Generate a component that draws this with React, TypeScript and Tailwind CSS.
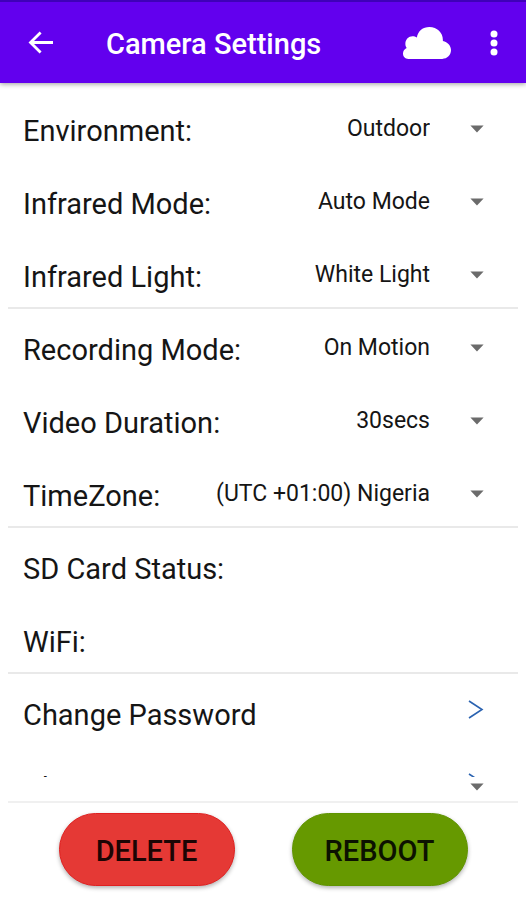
import { useState, type JSX, type ReactNode } from "react";

type Option = { id: string; label: string; options: string[]; last?: boolean };

const IMAGE_SETTINGS: Option[] = [
  { id: "environment", label: "Environment:", options: ["Outdoor", "Indoor"] },
  { id: "infrared-mode", label: "Infrared Mode:", options: ["Auto Mode", "On", "Off"] },
  { id: "infrared-light", label: "Infrared Light:", options: ["White Light", "Infrared"], last: true },
];

const RECORDING_SETTINGS: Option[] = [
  { id: "recording-mode", label: "Recording Mode:", options: ["On Motion", "Always", "Never"] },
  { id: "video-duration", label: "Video Duration:", options: ["30secs", "15secs", "60secs"] },
  { id: "timezone", label: "TimeZone:", options: ["(UTC +01:00) Nigeria", "(UTC +00:00) Ghana"], last: true },
];

function BackIcon(): JSX.Element {
  return (
    <svg width="26" height="24" viewBox="0 0 26 24" fill="none" stroke="currentColor" strokeWidth="2.8" aria-hidden="true">
      <path d="M25 11.5H3M12.6 1.5 2.5 11.5l10.1 10" />
    </svg>
  );
}

function CloudIcon(): JSX.Element {
  return (
    <svg width="48" height="32" viewBox="0 0 142 94" fill="currentColor" aria-hidden="true">
      <path d="M16 94C6 94 0 87 0 78c0-7 4-13 11-16-3-4-4-8-4-13C7 36 17 27 28 27c5 0 9 1 13 4C44 12 59 0 78 0c23 0 40 17 40 38v3c14 3 24 14 24 27 0 15-11 26-26 26Z" />
    </svg>
  );
}

function MoreIcon(): JSX.Element {
  return (
    <svg width="8" height="26" viewBox="0 0 8 26" fill="currentColor" aria-hidden="true">
      <circle cx="4" cy="4" r="3.5" />
      <circle cx="4" cy="13" r="3.5" />
      <circle cx="4" cy="22" r="3.5" />
    </svg>
  );
}

function Caret(): JSX.Element {
  return (
    <svg width="14" height="8" viewBox="0 0 14 8" className="fill-[#6b6b6b]" aria-hidden="true">
      <path d="M0.4 0.5h13.2L7 7.4Z" />
    </svg>
  );
}

function Chevron(): JSX.Element {
  return (
    <svg width="16" height="20" viewBox="0 0 16 20" fill="none" className="stroke-[#2a62b0]" strokeWidth="1.6" aria-hidden="true">
      <path d="M1 1 14 9.5 1 18" />
    </svg>
  );
}

function Row({ last, children }: { last?: boolean; children: ReactNode }): JSX.Element {
  return (
    <div
      className={`flex h-[73px] items-center border-b-2 pr-[34px] pl-[15px] ${last ? "border-[#e9e9e9]" : "border-transparent"}`}
    >
      {children}
    </div>
  );
}

function SelectRow({ id, label, options, last }: Option): JSX.Element {
  const [value, setValue] = useState(options[0]);
  return (
    <Row last={last}>
      <label htmlFor={id} className="pt-2.5 text-[29px] leading-8 whitespace-nowrap">
        {label}
      </label>
      <div className="relative flex flex-1 items-center pt-1.5">
        <select
          id={id}
          value={value}
          onChange={(e) => setValue(e.target.value)}
          className="w-full appearance-none bg-transparent pr-[54px] text-right text-[23px] leading-8 [text-align-last:right]"
        >
          {options.map((o) => (
            <option key={o}>{o}</option>
          ))}
        </select>
        <span className="pointer-events-none absolute right-0">
          <Caret />
        </span>
      </div>
    </Row>
  );
}

function LinkRow({ label }: { label: string }): JSX.Element {
  return (
    <a href="#" className="flex h-[73px] items-center justify-between border-b-2 border-transparent pr-[34px] pl-[15px]">
      <span className="pt-2.5 text-[29px] leading-8">{label}</span>
      <Chevron />
    </a>
  );
}

export default function App(): JSX.Element {
  return (
    <div className="bg-white font-[Roboto,sans-serif] text-[#151515]">
      <header className="flex h-[83px] items-center border-t-2 border-[#3f00b8] bg-[#6200ee] px-7 text-white shadow-[0_1px_5px_rgba(0,0,0,0.4)]">
        <button type="button" aria-label="Back">
          <BackIcon />
        </button>
        <h1 className="flex-1 pt-0.5 pl-[52px] text-[29px] leading-8 font-medium">Camera Settings</h1>
        <button type="button" aria-label="Cloud storage">
          <CloudIcon />
        </button>
        <button type="button" aria-label="More options" className="pl-[39px]">
          <MoreIcon />
        </button>
      </header>

      <main className="px-2 pt-[7px]">
        {IMAGE_SETTINGS.map((s) => (
          <SelectRow key={s.id} {...s} />
        ))}
        {RECORDING_SETTINGS.map((s) => (
          <SelectRow key={s.id} {...s} />
        ))}
        <Row>
          <span className="pt-2.5 text-[29px] leading-8">SD Card Status:</span>
        </Row>
        <Row last>
          <span className="pt-2.5 text-[29px] leading-8">WiFi:</span>
        </Row>
        <LinkRow label="Change Password" />
        <div className="h-[30px] overflow-hidden">
          <LinkRow label="Change Camera" />
        </div>
        <div className="flex h-[26px] items-start justify-end border-b-2 border-[#f0f0f0] pt-1.5 pr-[34px]">
          <Caret />
        </div>
      </main>

      <footer className="grid grid-cols-2 justify-items-center px-[30px] pt-2.5 pb-3">
        <button
          type="button"
          className="h-[73px] w-44 rounded-full border border-[#e02020] bg-[#e53935] pt-1 text-[29px] font-medium text-[#1c0504] shadow-[0_2px_4px_rgba(0,0,0,0.3)]"
        >
          DELETE
        </button>
        <button
          type="button"
          className="h-[73px] w-44 rounded-full border border-[#5f9400] bg-[#669900] pt-1 text-[29px] font-medium text-[#0c1200] shadow-[0_2px_4px_rgba(0,0,0,0.3)]"
        >
          REBOOT
        </button>
      </footer>
    </div>
  );
}
